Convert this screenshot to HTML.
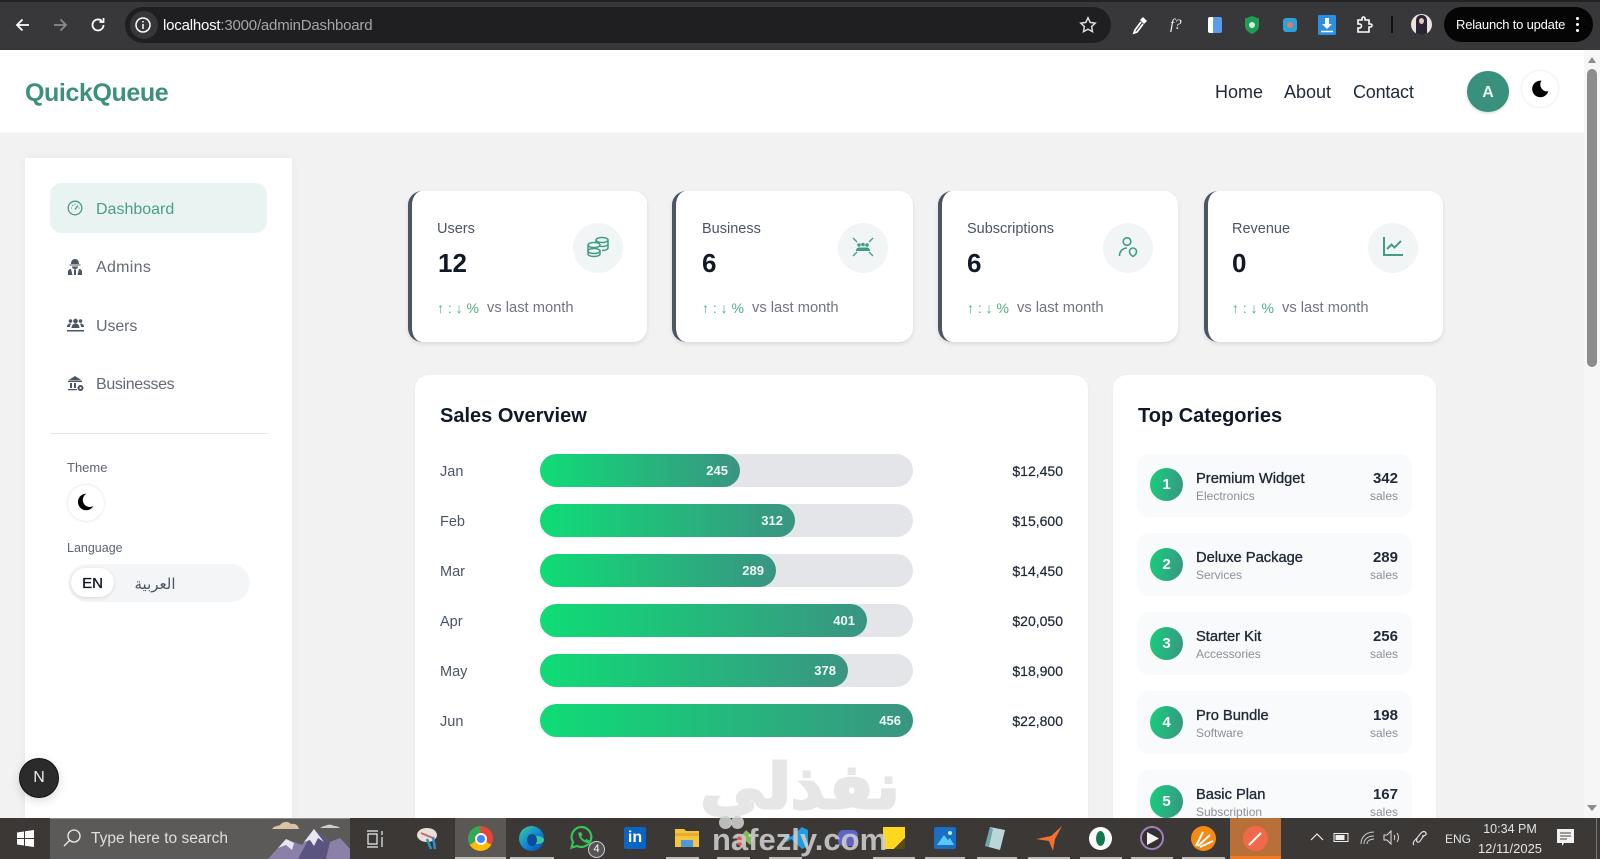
<!DOCTYPE html>
<html lang="en"><head><meta charset="utf-8"><title>QuickQueue</title>
<style>
*{box-sizing:border-box}
html,body{margin:0;padding:0;width:1600px;height:859px;overflow:hidden;background:#f2f2f2;font-family:"Liberation Sans","Noto Sans CJK SC",sans-serif}
#r{position:relative;width:1600px;height:859px;overflow:hidden;background:#f2f2f2}
.a,.t{position:absolute}
.t{white-space:nowrap;line-height:20px;height:20px}
.r{text-align:right}
svg{position:absolute;overflow:visible}
.card{position:absolute;top:191px;height:151px;background:#fff;border-left:4px solid #4b5563;border-radius:14px;box-shadow:0 2px 4px rgba(0,0,0,.10)}
.ic{position:absolute;top:223px;width:50px;height:50px;border-radius:50%;background:#f2f5f5}
.lab{font-size:14.5px;color:#4b5563;top:219px}
.num{font-size:26px;font-weight:700;color:#111827;top:253px}
.tr{font-size:14px;color:#4cae84;top:298px}
.vs{font-size:14.7px;color:#70757e;top:298px}
.track{position:absolute;left:540px;width:373px;height:33px;border-radius:17px;background:#e4e5e9}
.fill{position:absolute;left:0;top:0;height:33px;border-radius:17px;background:linear-gradient(90deg,#0fdc76,#3a9482)}
.fill span{position:absolute;right:12px;top:8px;font-size:13px;line-height:17px;font-weight:700;color:#eefaf5}
.m{left:440px;margin-top:1px;font-size:14.5px;color:#4b5563}
.v{right:537px;font-size:14px;color:#1f2937;-webkit-text-stroke:.2px #1f2937}
.it{position:absolute;left:1137px;width:275px;height:63px;border-radius:12px;background:#f9fafb}
.c{position:absolute;left:1150px;width:33px;height:33px;border-radius:50%;background:linear-gradient(100deg,#16d07c,#3a9482);color:#fff;font-weight:700;font-size:15px;line-height:33px;text-align:center}
.n{left:1196px;margin-top:1px;font-size:14.7px;color:#1f2937;-webkit-text-stroke:.35px #1f2937}
.s{left:1196px;margin-top:1px;font-size:12px;color:#8b9098}
.q{right:202px;margin-top:1px;font-size:15px;font-weight:700;color:#1f2937}
.sl{right:202px;margin-top:1px;font-size:12px;color:#8b9098}
.nv{font-size:16px;margin-top:1px;color:#646a74;left:96px}
.top{font-size:18px;color:#1f2937;top:82px}
.moon{position:absolute;border-radius:50%;background:#fff;box-shadow:0 1px 4px rgba(0,0,0,.14)}
.ul{position:absolute;top:857px;height:2px;background:#bdbab8}
</style></head><body><div id="r">

<!-- browser chrome -->
<div class="a" style="left:0;top:0;width:1600px;height:50px;background:#38383a"></div>
<div class="a" style="left:0;top:0;width:1600px;height:2px;background:#222"></div>
<div class="a" style="left:125px;top:7px;width:986px;height:36px;border-radius:18px;background:#1f1f21"></div>
<div class="a" style="left:130px;top:11px;width:28px;height:28px;border-radius:50%;background:#37373a"></div>
<svg style="left:14px;top:16px" width="18" height="18" viewBox="0 0 18 18" fill="none" stroke="#fff" stroke-width="1.8"><path d="M15 9H3M8.500 3.500 3 9l5.500 5.500"/></svg>
<svg style="left:51px;top:16px" width="18" height="18" viewBox="0 0 18 18" fill="none" stroke="#8a8a8a" stroke-width="1.800"><path d="M3 9h12M9.500 3.500 15 9l-5.500 5.500"/></svg>
<svg style="left:89px;top:16px" width="18" height="18" viewBox="0 0 18 18" fill="none" stroke="#fff" stroke-width="1.800"><path d="M14.500 9a5.500 5.500 0 1 1-1.800-4.100"/><path d="M14.500 2v4h-4" /></svg>
<svg style="left:134px;top:16px" width="18" height="18" viewBox="0 0 18 18" fill="none" stroke="#fff" stroke-width="1.500"><circle cx="9" cy="9" r="7"/><path d="M9 8v5M9 5v1.500"/></svg>
<div class="t" style="left:163px;top:16px;font-size:15px;color:#fff;letter-spacing:-.2px">localhost<span style="color:#a5a5a8">:3000/adminDashboard</span></div>
<svg style="left:1079px;top:16px" width="18" height="18" viewBox="0 0 18 18" fill="none" stroke="#ddd" stroke-width="1.500"><path d="m9 1.800 2.200 4.600 5 .7-3.600 3.500.9 5L9 13.200l-4.500 2.400.9-5L1.800 7.100l5-.7z"/></svg>
<svg style="left:1130px;top:15px" width="20" height="20" viewBox="0 0 20 20"><path d="M13 2l4 4-3 3-4-4z" fill="#fff"/><path d="M11 7 5 15l-1 3 3-1 6-8" fill="none" stroke="#fff" stroke-width="1.800"/></svg>
<div class="t" style="left:1170px;top:15px;font-family:'Liberation Serif',serif;font-style:italic;font-size:15px;color:#eee">f?</div>
<div class="a" style="left:1208px;top:17px;width:14px;height:16px;border-radius:2px;background:linear-gradient(90deg,#fff 35%,#5b9ce8 35%)"></div>
<svg style="left:1244px;top:15px" width="16" height="20" viewBox="0 0 16 20"><path d="M8 1l7 2.500v7C15 15 11 18 8 19 5 18 1 15 1 10.500v-7z" fill="#1f9d55"/><circle cx="8" cy="10" r="3" fill="#cfeedd"/></svg>
<div class="a" style="left:1283px;top:18px;width:14px;height:14px;border-radius:3px;background:#2aa3d8"></div><div class="a" style="left:1287px;top:22px;width:6px;height:6px;border-radius:50%;background:#e6786a"></div>
<svg style="left:1318px;top:15px" width="18" height="20" viewBox="0 0 18 20"><rect width="18" height="20" rx="1.500" fill="#2b8fe3"/><path d="M7 3h4v6h3l-5 5-5-5h3z" fill="#fff"/><path d="M3 16.500h12" stroke="#fff" stroke-width="1.500"/></svg>
<svg style="left:1355px;top:16px" width="18" height="18" viewBox="0 0 18 18" fill="none" stroke="#fff" stroke-width="1.600"><path d="M3 4h4V2.500a1.500 1.500 0 0 1 3 0V4h4v4h1.500a1.500 1.500 0 0 1 0 3H14v5H3v-4h1.500a2 2 0 0 0 0-4H3z"/></svg>
<div class="a" style="left:1391px;top:16px;width:2px;height:17px;background:#111"></div>
<div class="a" style="left:1411px;top:14px;width:21px;height:21px;border-radius:50%;background:#e9e4e2;overflow:hidden"><div class="a" style="left:5px;top:1px;width:11px;height:22px;border-radius:5px 5px 0 0;background:#2a2435"></div><div class="a" style="left:8px;top:4px;width:5px;height:6px;border-radius:50%;background:#e4c9b8"></div></div>
<div class="a" style="left:1444px;top:7px;width:149px;height:35px;border-radius:18px;background:#050505"></div>
<div class="t" style="left:1456px;top:15px;font-size:13px;color:#fff;letter-spacing:-.2px">Relaunch to update</div>
<div class="a" style="left:1576px;top:17px;width:3px;height:3px;border-radius:50%;background:#fff;box-shadow:0 6px #fff,0 12px #fff"></div>

<!-- header -->
<div class="a" style="left:0;top:50px;width:1600px;height:83px;background:#fff"></div>
<div class="t" style="left:25px;top:83px;font-size:25px;font-weight:700;color:#3c917e;letter-spacing:-.4px">QuickQueue</div>
<div class="t top" style="left:1215px">Home</div>
<div class="t top" style="left:1284px">About</div>
<div class="t top" style="left:1353px;letter-spacing:-.2px">Contact</div>
<div class="a" style="left:1467px;top:71px;width:42px;height:41px;border-radius:50%;background:#38907d;box-shadow:0 1px 3px rgba(0,0,0,.18)"></div>
<div class="t" style="left:1467px;width:42px;top:83px;text-align:center;font-size:16px;font-weight:700;color:#e8f5f1">A</div>
<div class="moon" style="left:1522px;top:71px;width:36px;height:36px;box-shadow:0 0 3px rgba(0,0,0,.12)"></div>
<svg style="left:1530px;top:78px" width="22" height="22" viewBox="0 0 24 24"><path d="M20 14.500A9 9 0 1 1 12.500 3 7.500 7.500 0 0 0 20 14.500z" fill="#000"/></svg>

<!-- scrollbar -->
<div class="a" style="left:1584px;top:50px;width:16px;height:768px;background:#f6f6f6"></div>
<div class="a" style="left:1587px;top:69px;width:10px;height:298px;border-radius:5px;background:#8c8c8c"></div>
<div class="a" style="left:1588px;top:57px;width:0;height:0;border:4px solid transparent;border-top:0;border-bottom:6px solid #8c8c8c;border-left-width:4px"></div>
<div class="a" style="left:1587px;top:805px;width:0;height:0;border:5px solid transparent;border-bottom:0;border-top:6px solid #8c8c8c"></div>

<!-- sidebar -->
<div class="a" style="left:25px;top:158px;width:267px;height:670px;background:#fff;box-shadow:0 0 8px rgba(0,0,0,.05)"></div>
<div class="a" style="left:50px;top:183px;width:217px;height:50px;border-radius:12px;background:#e9f4f2"></div>
<svg style="left:67px;top:200px" width="16" height="16" viewBox="0 0 16 16" fill="none" stroke="#4a9a87" stroke-width="1.300"><circle cx="8" cy="8" r="6.800"/><path d="M8 9.500 11 5.500M4 8h.8M5.300 5 6 5.700M8 3.800v.8M11.700 8h.8"/></svg>
<div class="t nv" style="top:199px;color:#4d9b88">Dashboard</div>
<svg style="left:67px;top:258px" width="16" height="18" viewBox="0 0 16 18" fill="#4b5563"><path d="M4 6c0-3 1.500-5 4-5s4 2 4 5zM2.500 6.500h11v1h-11zM5 8.500h6c0 1.500-1.200 2.500-3 2.500S5 10 5 8.500zM1 17v-3.500C1 12 2.500 11 4 11l1.500 6zM15 17v-3.500c0-1.500-1.500-2.500-3-2.500l-1.500 6zM7 11.500h2V17H7z"/></svg>
<div class="t nv" style="top:257px;letter-spacing:.3px">Admins</div>
<svg style="left:67px;top:318px" width="17" height="15" viewBox="0 0 17 15" fill="#4b5563"><circle cx="3.500" cy="3" r="1.800"/><circle cx="13.500" cy="3" r="1.800"/><circle cx="8.500" cy="3" r="2.300"/><path d="M4.500 10c0-3 2-4.500 4-4.500s4 1.500 4 4.500zM0 9c0-2.500 1.500-3.500 3.500-3.500l.5.300C3.300 6.800 3 8 3 9zM17 9c0-2.500-1.500-3.500-3.500-3.500l-.5.300c.7 1 1 2.200 1 3.200zM0 12h17v1.500H0z"/></svg>
<div class="t nv" style="top:316px;letter-spacing:-.1px">Users</div>
<svg style="left:67px;top:375px" width="17" height="18" viewBox="0 0 17 18" fill="#4b5563"><path d="M1 5.500 8 1l7 4.500zM1 6h14v1H1zM3 8h2v5H3zM7 8h2v5H7zM1 14h9v1.300H1z"/><circle cx="13.500" cy="13" r="3"/><circle cx="13.500" cy="13" r="1" fill="#fff"/></svg>
<div class="t nv" style="top:374px;letter-spacing:-.35px">Businesses</div>
<div class="a" style="left:50px;top:433px;width:218px;height:1px;background:#e5e7eb"></div>
<div class="t" style="left:67px;top:458px;font-size:13px;color:#5e6570">Theme</div>
<div class="moon" style="left:68px;top:485px;width:36px;height:36px;box-shadow:0 0 3px rgba(0,0,0,.14)"></div>
<svg style="left:75px;top:491px" width="22" height="22" viewBox="0 0 24 24"><path d="M20 16.500A9 9 0 1 1 12.500 3 7.500 7.500 0 0 0 20 16.500z" fill="#000"/></svg>
<div class="t" style="left:67px;top:538px;font-size:12.5px;color:#5e6570">Language</div>
<div class="a" style="left:68px;top:564px;width:182px;height:38px;border-radius:19px;background:#f3f5f6"></div>
<div class="a" style="left:71px;top:568px;width:43px;height:29px;border-radius:15px;background:#fff;box-shadow:0 1px 3px rgba(0,0,0,.12)"></div>
<div class="t" style="left:71px;width:43px;top:574px;text-align:center;font-size:15px;color:#111827;-webkit-text-stroke:.3px #111827">EN</div>
<div class="t" dir="rtl" style="left:130px;width:50px;top:574px;text-align:center;font-family:'DejaVu Sans',sans-serif;font-size:15px;color:#4b5563">العربية</div>

<!-- stat cards -->
<div class="card" style="left:408px;width:239px"></div><div class="card" style="left:672px;width:241px"></div><div class="card" style="left:938px;width:240px"></div><div class="card" style="left:1204px;width:239px"></div>
<div class="t lab" style="left:437px">Users</div><div class="t num" style="left:438px">12</div>
<div class="t tr" style="left:437px">↑ : ↓ %</div><div class="t vs" style="left:487px">vs last month</div>
<div class="t lab" style="left:702px">Business</div><div class="t num" style="left:702px">6</div>
<div class="t tr" style="left:702px">↑ : ↓ %</div><div class="t vs" style="left:752px">vs last month</div>
<div class="t lab" style="left:967px">Subscriptions</div><div class="t num" style="left:967px">6</div>
<div class="t tr" style="left:967px">↑ : ↓ %</div><div class="t vs" style="left:1017px">vs last month</div>
<div class="t lab" style="left:1232px">Revenue</div><div class="t num" style="left:1232px">0</div>
<div class="t tr" style="left:1232px">↑ : ↓ %</div><div class="t vs" style="left:1282px">vs last month</div>
<div class="ic" style="left:573px"></div><div class="ic" style="left:838px"></div><div class="ic" style="left:1103px"></div><div class="ic" style="left:1368px"></div>
<svg style="left:587px;top:236px" width="22" height="22" viewBox="0 0 22 22" fill="none" stroke="#3f9c87" stroke-width="1.500"><ellipse cx="15" cy="4" rx="6" ry="2.500"/><path d="M9 4v8M21 4v8c0 1-2 2.500-6 2.500M9 8c0 1.500 3 2.500 6 2.500S21 9.500 21 8"/><ellipse cx="7" cy="9" rx="6" ry="2.500" fill="#f2f5f5"/><path d="M1 9v4c0 1.500 3 2.500 6 2.500M1 13v5c0 1.500 3 2.500 6 2.500s6-1 6-2.500v-4"/><ellipse cx="7" cy="15" rx="6" ry="2.500" fill="#f2f5f5"/></svg>
<svg style="left:852px;top:236px" width="22" height="22" viewBox="0 0 22 22" fill="#3f9c87"><circle cx="7" cy="9" r="1.800"/><circle cx="11" cy="8.500" r="1.800"/><circle cx="15" cy="9" r="1.800"/><path d="M4 15c0-3 2-3.500 3-3.500h8c1 0 3 .5 3 3.500z"/><path d="M1 2l4 4M21 2l-4 4M1 20l4-4M21 20l-4-4" stroke="#3f9c87" stroke-width="1.300"/></svg>
<svg style="left:1117px;top:236px" width="22" height="22" viewBox="0 0 22 22" fill="none" stroke="#3f9c87" stroke-width="1.600"><circle cx="10" cy="5.500" r="3.800"/><path d="M2.500 20c0-5 3.500-8 7.500-8"/><path d="M16 20.500c-2.500-1.500-3.500-3-3.500-5a3.500 3.500 0 0 1 7 0c0 2-1 3.500-3.500 5z"/></svg>
<svg style="left:1382px;top:236px" width="22" height="22" viewBox="0 0 22 22" fill="none" stroke="#3f9c87" stroke-width="2"><path d="M2 1v18h19"/><path d="M5 13l4.500-4.500 3 3L19 5"/></svg>

<!-- sales overview -->
<div class="a" style="left:415px;top:375px;width:673px;height:470px;background:#fff;border-radius:14px;box-shadow:0 1px 3px rgba(0,0,0,.04)"></div>
<div class="t" style="left:440px;top:406px;font-size:20px;font-weight:700;color:#111827">Sales Overview</div>
<div class="track" style="top:454px"><div class="fill" style="width:200px"><span>245</span></div></div>
<div class="track" style="top:504px"><div class="fill" style="width:255px"><span>312</span></div></div>
<div class="track" style="top:554px"><div class="fill" style="width:236px"><span>289</span></div></div>
<div class="track" style="top:604px"><div class="fill" style="width:327px"><span>401</span></div></div>
<div class="track" style="top:654px"><div class="fill" style="width:308px"><span>378</span></div></div>
<div class="track" style="top:704px"><div class="fill" style="width:373px"><span>456</span></div></div>
<div class="t m" style="top:461px">Jan</div><div class="t v" style="top:461px">$12,450</div>
<div class="t m" style="top:511px">Feb</div><div class="t v" style="top:511px">$15,600</div>
<div class="t m" style="top:561px">Mar</div><div class="t v" style="top:561px">$14,450</div>
<div class="t m" style="top:611px">Apr</div><div class="t v" style="top:611px">$20,050</div>
<div class="t m" style="top:661px">May</div><div class="t v" style="top:661px">$18,900</div>
<div class="t m" style="top:711px">Jun</div><div class="t v" style="top:711px">$22,800</div>

<!-- top categories -->
<div class="a" style="left:1113px;top:375px;width:323px;height:470px;background:#fff;border-radius:14px;box-shadow:0 1px 3px rgba(0,0,0,.04)"></div>
<div class="t" style="left:1138px;top:406px;font-size:20px;font-weight:700;color:#111827">Top Categories</div>
<div class="it" style="top:454px"></div><div class="it" style="top:533px"></div><div class="it" style="top:612px"></div><div class="it" style="top:691px"></div><div class="it" style="top:770px"></div>
<div class="c" style="top:468px">1</div><div class="n t" style="top:468px">Premium Widget</div><div class="s t" style="top:485px">Electronics</div><div class="q t" style="top:468px">342</div><div class="sl t" style="top:485px">sales</div>
<div class="c" style="top:548px">2</div><div class="n t" style="top:547px">Deluxe Package</div><div class="s t" style="top:564px">Services</div><div class="q t" style="top:547px">289</div><div class="sl t" style="top:564px">sales</div>
<div class="c" style="top:627px">3</div><div class="n t" style="top:626px">Starter Kit</div><div class="s t" style="top:643px">Accessories</div><div class="q t" style="top:626px">256</div><div class="sl t" style="top:643px">sales</div>
<div class="c" style="top:706px">4</div><div class="n t" style="top:705px">Pro Bundle</div><div class="s t" style="top:722px">Software</div><div class="q t" style="top:705px">198</div><div class="sl t" style="top:722px">sales</div>
<div class="c" style="top:785px">5</div><div class="n t" style="top:784px">Basic Plan</div><div class="s t" style="top:801px">Subscription</div><div class="q t" style="top:784px">167</div><div class="sl t" style="top:801px">sales</div>

<!-- next badge -->
<div class="a" style="left:19px;top:758px;width:40px;height:40px;border-radius:50%;background:#2b2b2b;border:1px solid #111;box-shadow:0 3px 10px rgba(0,0,0,.14);color:#eee;font-size:16px;line-height:38px;text-align:center">N</div>

<!-- arabic watermark -->
<div class="t" dir="rtl" style="left:695px;width:210px;top:762px;height:50px;line-height:50px;text-align:center;font-family:'DejaVu Sans',sans-serif;font-weight:700;font-size:62px;color:#e6e6e6;-webkit-text-stroke:3px #e6e6e6;transform:scaleX(1.05)">نفذلي</div>

<!-- taskbar -->
<div class="a" style="left:0;top:818px;width:1600px;height:41px;background:#3b3836"></div>
<svg style="left:17px;top:830px" width="17" height="17" viewBox="0 0 17 17" fill="#fff"><path d="M0 2.500 7 1.500v6.500H0zM8 1.300 17 0v8H8zM0 9h7v6.500L0 14.500zM8 9h9v8l-9-1.300z"/></svg>
<div class="a" style="left:50px;top:818px;width:300px;height:41px;background:#5c5a58;border-top:1px solid #8a8886"></div>
<svg style="left:62px;top:828px" width="20" height="20" viewBox="0 0 20 20" fill="none" stroke="#eee" stroke-width="1.300"><circle cx="12" cy="8" r="6"/><path d="M7.500 12.500 2 18"/></svg>
<div class="t" style="left:91px;top:829px;font-size:15.5px;color:#dfdfdf">Type here to search</div>
<svg style="left:268px;top:820px" width="82" height="39" viewBox="0 0 82 39"><path d="M4 9c2-3 6-3 8-4 3-4 8-4 11-1 4-1 7 1 8 5z" fill="#d8c3a5"/><path d="M52 8c3-2 5-2 7-3 3-1 6 0 7 1 3 0 5 1 6 2z" fill="#d0cdc8"/><path d="M0 39 18 19 34 25 46 9 62 22 72 18 82 29V39z" fill="#8a80a8"/><path d="M46 9 62 22 58 39H30z" fill="#5a5580"/><path d="M46 9 36 22 42 20 46 26 50 18 56 22zM18 19 10 28 18 25 24 30 26 23z" fill="#e8e6f0"/></svg>
<svg style="left:366px;top:830px" width="18" height="18" viewBox="0 0 18 18" fill="none" stroke="#eee" stroke-width="1.200"><path d="M1 1h11M1 17h11M2 4h9v10H2zM16 1v4M16 7v10"/></svg>

<div class="a" style="left:455px;top:818px;width:51px;height:41px;background:#5a5755"></div>
<div class="ul" style="left:455px;width:51px"></div><div class="ul" style="left:510px;width:44px"></div><div class="ul" style="left:666px;width:33px"></div><div class="ul" style="left:717px;width:33px"></div><div class="ul" style="left:769px;width:33px"></div><div class="ul" style="left:873px;width:42px"></div><div class="ul" style="left:925px;width:40px"></div><div class="ul" style="left:977px;width:40px"></div><div class="ul" style="left:1028px;width:42px"></div><div class="ul" style="left:1080px;width:42px"></div><div class="ul" style="left:1131px;width:42px"></div><div class="ul" style="left:1182px;width:43px"></div>

<svg style="left:416px;top:826px" width="24" height="26" viewBox="0 0 24 26"><ellipse cx="11" cy="9" rx="10" ry="7" fill="#e9e0dc"/><path d="M5 7 17 12" stroke="#c26a6a" stroke-width="2"/><path d="M11 13l4 10M17 11l2 12" stroke="#2f8fc0" stroke-width="2.500" fill="none"/></svg>
<div class="a" style="left:468px;top:826px;width:25px;height:25px;border-radius:50%;background:conic-gradient(#ea4335 0 120deg,#fbbc05 120deg 240deg,#34a853 240deg)"></div>
<div class="a" style="left:474.500px;top:832.500px;width:12px;height:12px;border-radius:50%;background:#4285f4;border:2px solid #fff"></div>
<div class="a" style="left:519px;top:826px;width:25px;height:25px;border-radius:50%;background:linear-gradient(135deg,#3ad29f,#0c7ad6 60%,#0a4fa8)"></div>
<div class="a" style="left:530px;top:836px;width:14px;height:8px;border-radius:50%;background:#38c6a0"></div>
<div class="a" style="left:527px;top:834px;width:10px;height:12px;border-radius:50%;background:#0c4a9a"></div>
<svg style="left:570px;top:825px" width="28" height="27" viewBox="0 0 28 27"><path d="M12 2a10 10 0 0 0-9 15L1.500 22.500 7 21a10 10 0 1 0 5-19z" fill="#3b3836" stroke="#35c25a" stroke-width="2.200"/><path d="M8.500 7.500 11 7l1.500 3-1.300 1.500c.8 1.500 2 2.800 3.800 3.600L16.500 14l3 1.500-.5 2.300c-5 1.200-11.500-5.300-10.500-10.300z" fill="#35c25a"/></svg>
<div class="a" style="left:588px;top:841px;width:17px;height:17px;border-radius:50%;background:#555;border:1px solid #ccc;color:#fff;font-size:11px;line-height:15px;text-align:center">4</div>
<div class="a" style="left:624px;top:827px;width:22px;height:22px;background:#0a66c2;border-radius:2px;color:#fff;font-size:16px;font-weight:700;line-height:22px;text-align:center">in</div>
<svg style="left:675px;top:827px" width="24" height="22" viewBox="0 0 24 22"><path d="M0 2h9l2 2h13v16H0z" fill="#f5c542"/><path d="M0 6h24v3H0z" fill="#e4ad2c"/><rect x="6" y="13" width="12" height="7" fill="#4f9ad6"/></svg>
<svg style="left:735px;top:828px" width="22" height="20" viewBox="0 0 22 20"><path d="M2 5 11 14l-5 5-4-3z" fill="#e05a4e"/><path d="M11 2l9 8-5 7-9-9z" fill="#7dbb58"/></svg>
<svg style="left:785px;top:826px" width="24" height="24" viewBox="0 0 24 24"><path d="M17 1 23 4v16l-6 3L6 13l-4 3-2-1V9l2-1 4 3z" fill="#1f9bde"/></svg>
<div class="a" style="left:838px;top:830px;width:20px;height:16px;border-radius:5px;background:#6264c4"></div>
<div class="a" style="left:883px;top:827px;width:22px;height:22px;background:#ffd71f"></div>
<div class="a" style="left:894px;top:838px;width:11px;height:11px;background:linear-gradient(135deg,transparent 50%,#5a4a10 50%)"></div>
<svg style="left:934px;top:827px" width="22" height="22" viewBox="0 0 22 22"><rect width="22" height="22" rx="2" fill="#1a6fc4"/><path d="M3 18 10 8l4 5 2-2 4 7z" fill="#5ac8f5"/><circle cx="16" cy="6" r="2" fill="#bfe8fb"/></svg>
<svg style="left:984px;top:826px" width="22" height="25" viewBox="0 0 22 25"><path d="M6 1 21 4 16 24 1 20z" fill="#bcd6d8"/><path d="M1 20 6 1 9 3 5 21z" fill="#6ca5ad"/></svg>
<svg style="left:1036px;top:826px" width="26" height="25" viewBox="0 0 26 25"><path d="M26 0 15 10 0 13 13 15 17 25 19 13z" fill="#f4722b"/></svg>
<div class="a" style="left:1089px;top:827px;width:23px;height:23px;border-radius:50%;background:#fff"></div>
<div class="a" style="left:1096px;top:831px;width:9px;height:15px;border-radius:50%;background:#0f7a4f"></div>
<div class="a" style="left:1140px;top:826px;width:24px;height:24px;border-radius:50%;border:2px solid #a67fc0;background:#33302e"></div>
<svg style="left:1147px;top:832px" width="12" height="13" viewBox="0 0 12 13"><path d="M0 0 12 6.500 0 13z" fill="#f2f2f2"/></svg>
<div class="a" style="left:1191px;top:826px;width:25px;height:25px;border-radius:50%;background:#f48a16"></div>
<svg style="left:1194px;top:830px" width="20" height="18" viewBox="0 0 20 18" fill="none" stroke="#fff" stroke-width="2"><path d="M2 16 9 2M4 16 16 5M6 17 19 11"/></svg>
<div class="a" style="left:1230px;top:818px;width:51px;height:41px;background:#b96f38"></div>
<div class="a" style="left:1230px;top:856px;width:51px;height:3px;background:#f47a1f"></div>
<div class="a" style="left:1243px;top:826px;width:25px;height:25px;border-radius:50%;background:#f0694a"></div>
<svg style="left:1247px;top:830px" width="17" height="17" viewBox="0 0 17 17" fill="none" stroke="#fff" stroke-width="2"><path d="M2 15 14 3"/></svg>

<svg style="left:1310px;top:832px" width="14" height="10" viewBox="0 0 14 10" fill="none" stroke="#eee" stroke-width="1.200"><path d="M1 8 7 2l6 6"/></svg>
<svg style="left:1333px;top:832px" width="17" height="11" viewBox="0 0 17 11"><rect x="1" y="1.500" width="14" height="8" fill="none" stroke="#eee"/><rect x="2.500" y="3" width="9" height="5" fill="#eee"/></svg>
<svg style="left:1360px;top:831px" width="15" height="14" viewBox="0 0 15 14" fill="none" stroke="#ccc"><path d="M1 13C1 6 6 1 14 1M4 13c0-5 4-8 10-8M7 13c0-3 3-5 7-5"/></svg>
<svg style="left:1383px;top:830px" width="18" height="15" viewBox="0 0 18 15" fill="none" stroke="#ddd"><path d="M1 5h3l4-4v13l-4-4H1zM11 5c1 1 1 4 0 5M14 3c2 3 2 6 0 9"/></svg>
<svg style="left:1412px;top:829px" width="17" height="18" viewBox="0 0 17 18" fill="none" stroke="#ddd" stroke-width="1.200"><path d="M2 16c-2-2 0-4 3-7l4-5c2-2 4-2 5 0s-2 3-4 3M5 9c-1 3 0 5 2 4s3-5 5-6"/></svg>
<div class="t" style="left:1445px;top:829px;font-size:12px;color:#e4e4e4">ENG</div>
<div class="t" style="left:1460px;width:100px;top:819px;text-align:center;font-size:12.5px;color:#e4e4e4">10:34 PM</div>
<div class="t" style="left:1460px;width:100px;top:839px;text-align:center;font-size:13px;color:#e4e4e4">12/11/2025</div>
<svg style="left:1557px;top:829px" width="18" height="18" viewBox="0 0 18 18"><path d="M0 0h17v14H7l-2 3v-3H0z" fill="#f2f2f2"/><path d="M3 4h11M3 7h11M3 10h7" stroke="#444"/></svg>
<div class="a" style="left:1596px;top:818px;width:1px;height:41px;background:#777"></div>

<!-- watermark -->
<div class="t" style="left:712px;top:823px;height:34px;line-height:34px;font-size:31px;font-weight:700;color:rgba(206,206,206,.88)">nafezly.com</div>
<div class="a" style="left:719px;top:816px;width:13px;height:13px;border-radius:50%;background:rgba(206,206,206,.88)"></div>
<div class="a" style="left:731px;top:816px;width:13px;height:13px;border-radius:50%;background:rgba(206,206,206,.88)"></div>

</div></body></html>
